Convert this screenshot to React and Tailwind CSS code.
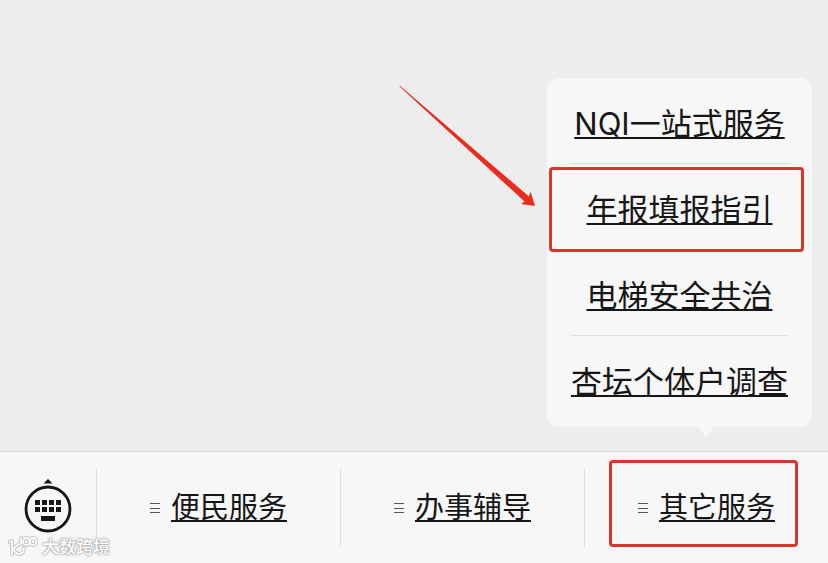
import React, { useState } from 'react';

const tabs = [
  { id: 'convenience', label: '便民服务' },
  { id: 'guidance', label: '办事辅导' },
  { id: 'other', label: '其它服务', marked: true },
];

const menuItems = [
  { id: 1, label: 'NQI一站式服务' },
  { id: 2, label: '年报填报指引', marked: true },
  { id: 3, label: '电梯安全共治' },
  { id: 4, label: '杏坛个体户调查' },
];

function KeyboardIcon() {
  return (
    <svg width="48" height="60" viewBox="0 0 48 60" fill="#161616">
      <path d="M24 1l4.500 4.500h-9z" />
      <circle cx="24" cy="31" r="22" fill="none" stroke="#161616" strokeWidth="2.800" />
      {[11, 18, 25, 32].map(x => (
        <g key={x}>
          <rect x={x} y="22" width="5" height="5" />
          <rect x={x} y="29" width="5" height="5" />
        </g>
      ))}
      <rect x="17" y="38" width="14" height="5" />
    </svg>
  );
}

function Watermark() {
  const logo = (
    <>
      <path d="M1.500 6L4 5v13M11 8l-6 5c2 3 3 5 6 5s5-2 5-6" />
      <circle cx="18.500" cy="5.500" r="3.500" />
      <circle cx="25" cy="5.500" r="3.500" />
      <path d="M13 2v6" />
    </>
  );
  return (
    <div className="pointer-events-none absolute bottom-1 left-2 flex items-center gap-1">
      <svg width="30" height="22" viewBox="0 0 30 22" fill="none" strokeLinecap="round" strokeLinejoin="round">
        <g stroke="#c4c4c4" strokeWidth="3.800">{logo}</g>
        <g stroke="#ffffff" strokeWidth="1.800">{logo}</g>
      </svg>
      <span className="text-[17px] leading-6 font-medium text-white [text-shadow:0_0_1px_#999,0_0_2px_#aaa,0_0_3px_#aaa]">大数跨境</span>
    </div>
  );
}

export default function ServiceMenuPage() {
  const [open, setOpen] = useState('other');

  return (
    <div className="relative flex min-h-screen flex-col bg-[#ededed] text-[#161616] font-['Inter','Noto_Sans_CJK_SC',sans-serif]">
      <main className="flex flex-1 items-end justify-end pr-4 pb-6">
        {open === 'other' && (
          <nav className="relative rounded-xl bg-[#f7f7f7] px-6 pb-1.5">
            <ul>
              {menuItems.map(item => (
                <li key={item.id} className="relative border-b border-[#dedede] last:border-b-0">
                  <a
                    href="#"
                    className="flex h-[85px] items-center justify-center pt-1.5 text-[31px] leading-10 font-normal"
                  >
                    <span className="underline decoration-2 underline-offset-2 [text-decoration-skip-ink:none]">{item.label}</span>
                  </a>
                  {item.marked && (
                    <span className="pointer-events-none absolute top-[3px] -right-4 -bottom-[3px] -left-[22px] rounded-sm border-3 border-[#dc352b]" />
                  )}
                </li>
              ))}
            </ul>

            {/* Pointer towards the open tab */}
            <svg className="absolute top-full right-[98px]" width="16" height="11" viewBox="0 0 16 11" fill="#f7f7f7">
              <path d="M1 0h14L9 10q-1 1-2 0z" />
            </svg>

            {/* Red arrow */}
            <svg className="absolute top-2 right-full mr-3" width="138" height="122" viewBox="0 0 138 122" fill="#e92c1c">
              <path d="M1 -1L2 -1L132 110.500l1.500-5L138 120l-14-2 3.500-2.500z" />
            </svg>
          </nav>
        )}
      </main>

      <footer className="flex items-stretch border-t border-[#d9d9d9] bg-[#f7f7f7] py-4">
        <button aria-label="键盘" className="flex w-[97px] items-center justify-center border-r border-[#dedede]">
          <KeyboardIcon />
        </button>
        {tabs.map(tab => (
          <div key={tab.id} className="relative flex-1 border-r border-[#dedede] last:border-r-0">
            <button
              onClick={() => setOpen(open === tab.id ? null : tab.id)}
              className="flex h-[79px] w-full items-center justify-center gap-[11px] text-[29px] leading-10 font-normal"
            >
              <svg width="10" height="12" viewBox="0 0 10 12" stroke="#555555" strokeWidth="1">
                <path d="M0 1.500h10M0 6.500h10M0 10.500h10" />
              </svg>
              <span className="underline decoration-2 underline-offset-2 [text-decoration-skip-ink:none]">{tab.label}</span>
            </button>
            {tab.marked && (
              <span className="pointer-events-none absolute -top-2 right-[30px] bottom-0 left-6 rounded-sm border-3 border-[#dc352b]" />
            )}
          </div>
        ))}
      </footer>

      <Watermark />
    </div>
  );
}
